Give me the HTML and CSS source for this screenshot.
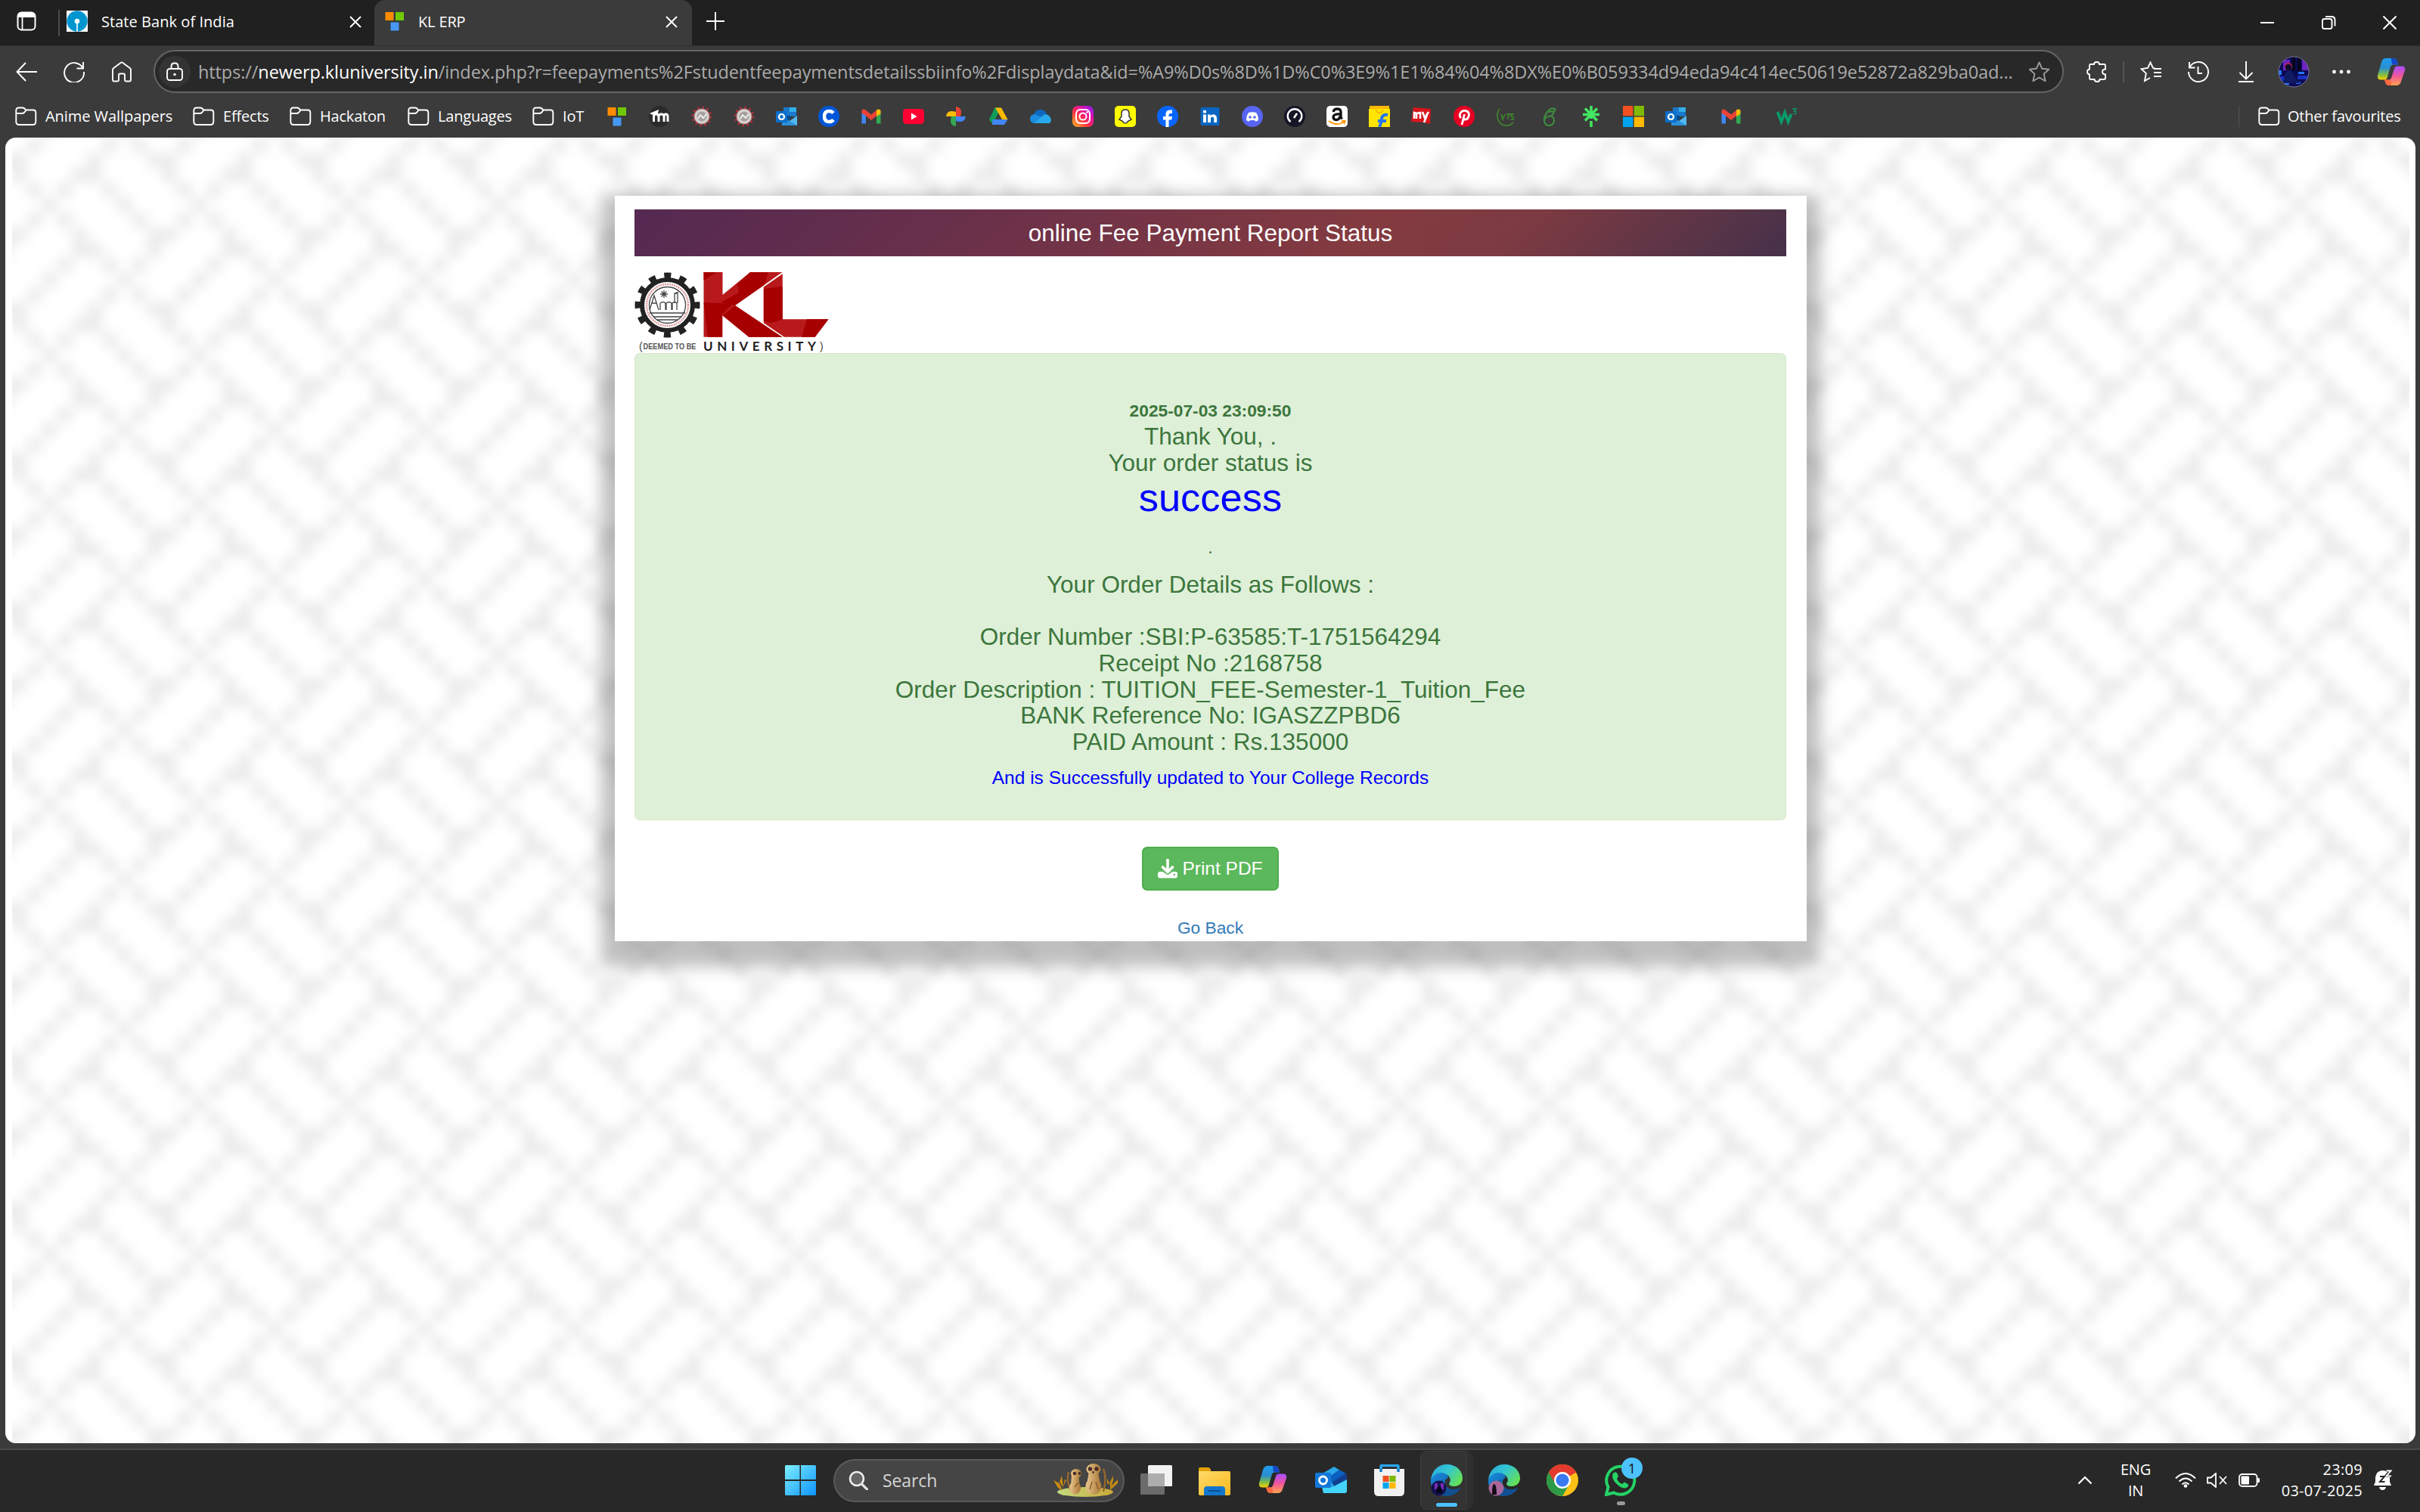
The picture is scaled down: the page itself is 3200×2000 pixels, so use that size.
FILE: index.html
```html
<!DOCTYPE html>
<html lang="en">
<head>
<meta charset="utf-8">
<title>KL ERP</title>
<link rel="stylesheet" href="styles.css">
</head>
<body>
<svg class="defs" width="0" height="0">
  <defs>
    <linearGradient id="cpA" x1="0" y1="0" x2="0" y2="1"><stop offset="0" stop-color="#1f9df0"/><stop offset=".45" stop-color="#2a8fd0"/><stop offset=".75" stop-color="#7cbb4a"/><stop offset="1" stop-color="#f5d000"/></linearGradient>
    <linearGradient id="cpB" x1="0" y1="0" x2="0" y2="1"><stop offset="0" stop-color="#a64dff"/><stop offset=".5" stop-color="#f0569a"/><stop offset="1" stop-color="#ffa34d"/></linearGradient>
    <linearGradient id="insta" x1="0" y1="1" x2="1" y2="0"><stop offset="0" stop-color="#ffc020"/><stop offset=".4" stop-color="#ff3040"/><stop offset=".7" stop-color="#e010b0"/><stop offset="1" stop-color="#7a20ff"/></linearGradient>
    <linearGradient id="edgeA" x1="0" y1="0" x2="1" y2=".6"><stop offset="0" stop-color="#2aa5d8"/><stop offset=".5" stop-color="#33c5d5"/><stop offset="1" stop-color="#62e05a"/></linearGradient>
    <linearGradient id="edgeB" x1="0" y1="0" x2="1" y2="1"><stop offset="0" stop-color="#1a8fe0"/><stop offset="1" stop-color="#0c4a90"/></linearGradient>
    <linearGradient id="win" x1="0" y1="0" x2="1" y2="1"><stop offset="0" stop-color="#7df0ff"/><stop offset="1" stop-color="#0d93ff"/></linearGradient>
    <linearGradient id="fold" x1="0" y1="0" x2="1" y2="1"><stop offset="0" stop-color="#ffda6a"/><stop offset="1" stop-color="#f9b81c"/></linearGradient>
    <linearGradient id="grass" x1="0" y1="0" x2="1" y2="0"><stop offset="0" stop-color="#c5dc80"/><stop offset="1" stop-color="#c8a838"/></linearGradient>
    <linearGradient id="fur" x1="0" y1="0" x2="1" y2="0"><stop offset="0" stop-color="#e8c48a"/><stop offset="1" stop-color="#a87838"/></linearGradient>
    <symbol id="folder" viewBox="0 0 29 26"><path d="M1.300 20V5q0-3.500 3.500-3.500h5q1.500 0 2.500 1l2 2h9.500q3.500 0 3.500 3.500v12q0 4-4 4H5.300q-4 0-4-4zM1.300 9h8q1.500 0 2.500-1l3-3.500" fill="none" stroke="#fff" stroke-width="1.900"/></symbol>
    <symbol id="klerp" viewBox="0 0 28 28"><path fill="#ff8c00" d="M1.500 2h11v11h-11z"/><path fill="#70c800" d="M15 2h11v11H15z"/><path fill="#4698f4" d="M8.500 15.500h11v11h-11z"/></symbol>
    <symbol id="seal" viewBox="0 0 28 28"><circle cx="14" cy="14" r="12" fill="none" stroke="#b02c34" stroke-width="3" stroke-dasharray="2.500 3.780"/><circle cx="14" cy="14" r="10" fill="#d8d3d1" stroke="#b98285" stroke-width="1.200"/><circle cx="14" cy="14" r="6.500" fill="#a5a09e"/><path d="M9 17l3-5 4 4 4-5" stroke="#eee" stroke-width="2" fill="none"/></symbol>
    <symbol id="outlook" viewBox="0 0 28 28"><path fill="#1a78cc" d="M10 2h17v12H10z"/><path fill="#33b0ea" d="M18 2h9v6h-9z"/><path fill="#0a4a8c" d="M10 13h9v6h-9z"/><path fill="#50b8ee" d="M28 13v13H8l10-6z"/><path fill="#2b8fd9" d="M8 14l20 12H8z"/><rect y="7" width="15" height="15" rx="1.500" fill="#0b6fca"/><circle cx="7.500" cy="14.500" r="3.500" fill="none" stroke="#fff" stroke-width="2.200"/></symbol>
    <symbol id="gmail" viewBox="0 0 28 28"><path fill="#4285f4" d="M1.500 9v14.500H7V12z"/><path fill="#34a853" d="M26.500 9v14.500H21V12z"/><path fill="#ea4335" d="M1.500 6.500q1-3 4.500-1.500l8 6.500L22 5v7.500l-8 6.500-8-6.500-4.500-3z"/><path fill="#fbbc04" d="M21 5.500q4.500-2.500 5.500 1v4L21 14z"/></symbol>
    <symbol id="ms" viewBox="0 0 28 28"><path fill="#f25022" d="M0 0h13.300v13.300H0z"/><path fill="#7fba00" d="M14.700 0H28v13.300H14.700z"/><path fill="#00a4ef" d="M0 14.700h13.300V28H0z"/><path fill="#ffb900" d="M14.700 14.700H28V28H14.700z"/></symbol>
    <symbol id="copilot" viewBox="0 0 40 40"><path fill="url(#cpA)" d="M13 1h10q4 0 5 4l1.500 5h-7q-3 0-4 4l-4 14q-1 3-4 3H5q-5 0-4-6L6.500 6q1.500-5 6.500-5z"/><path fill="#1747c8" d="M20 1h3q4 0 5 4l1.500 5h-6q-3 0-3-4z"/><path fill="url(#cpB)" d="M27 39H17q-4 0-5-4l-1.500-4h6q3 0 4-4l4-12q1-3 4-3H35q5 0 4 6l-5.500 16Q32 39 27 39z"/><path fill="#ff6a3c" d="M20 39h-3q-4 0-5-4l-1.500-4h5q4 0 4.500 4z"/></symbol>
    <symbol id="edge" viewBox="0 0 42 42"><path fill="url(#edgeB)" d="M0 21C1 12 9 9 15 10q7 1 8 7l-4 4c-2 9 6 16 20 10q-6 11-19 11C8 42-1 32 0 21z"/><path fill="#104f90" d="M16 20c-2 10 8 18 23 11q-6 11-19 11C8 40 8 24 16 20z"/><path fill="url(#edgeA)" d="M0 20C2 7 10 0 21 0c12 0 21 8 21 18 0 7-5 11-11 11-5 0-8-2-6.500-4.500C27 22 26 17 22 14 15 8 4 11 0 20z"/></symbol>
    <symbol id="close" viewBox="0 0 16 16"><path d="M1 1l14 14M15 1L1 15" fill="none" stroke="#fff" stroke-width="1.900"/></symbol>
  </defs>
</svg>

<header class="browser">
  <div class="tabs">
    <svg class="tab-actions" viewBox="0 0 26 26"><rect x="1.500" y="1.500" width="23" height="23" rx="5" fill="none" stroke="#fff" stroke-width="2"/><path d="M2 8V5q0-3 3-3h16q3 0 3 3v3z" fill="#fff"/><path d="M7.500 8v16" stroke="#fff" stroke-width="1.800"/></svg>
    <span class="tab-sep"></span>
    <div class="tab tab-first">
      <svg class="fav" viewBox="0 0 28 28"><path fill="#fff" d="M0 0h28v28H0z"/><circle cx="14" cy="14" r="13.700" fill="#0095cf"/><circle cx="14" cy="14" r="3.300" fill="#fff"/><path d="M14 15v13" stroke="#fff" stroke-width="1.600"/></svg>
      <span class="tab-title title-sbi">State Bank of India</span>
      <svg class="tab-close"><use href="#close"/></svg>
    </div>
    <div class="tab tab-active">
      <svg class="fav"><use href="#klerp"/></svg>
      <span class="tab-title">KL ERP</span>
      <svg class="tab-close"><use href="#close"/></svg>
    </div>
    <svg class="new-tab" viewBox="0 0 24 24"><path d="M12 0v24M0 12h24" stroke="#fff" stroke-width="1.900"/></svg>
    <div class="window-controls">
      <svg viewBox="0 0 20 20"><path d="M1 10h18" stroke="#fff" stroke-width="2"/></svg>
      <svg viewBox="0 0 20 20"><rect x="2" y="5" width="12.500" height="13" rx="2.500" fill="none" stroke="#fff" stroke-width="1.900"/><path d="M6 2h8q4.500 0 4.500 4.500v8" fill="none" stroke="#fff" stroke-width="1.900"/></svg>
      <svg viewBox="0 0 20 20"><path d="M1.500 1.500l17 17M18.500 1.500l-17 17" stroke="#fff" stroke-width="2"/></svg>
    </div>
  </div>

  <div class="toolbar">
    <div class="tool"><svg viewBox="0 0 28 28"><path d="M28 14H1.500M13 2L1.500 14 13 26" fill="none" stroke="#fff" stroke-width="1.900"/></svg></div>
    <div class="tool"><svg viewBox="0 0 28 28"><path d="M25.500 9A13 13 0 1 0 27 14M26 1v8.500h-8.500" fill="none" stroke="#fff" stroke-width="1.900"/></svg></div>
    <div class="tool"><svg viewBox="0 0 28 28"><path d="M2 11.500q0-1.500 1-2.300L13 1.700q1-.7 2 0l10 7.500q1 .8 1 2.300V25q0 1.500-1.500 1.500h-5Q18 26.500 18 25v-7q0-1.500-1.500-1.500h-5Q10 16.500 10 18v7q0 1.500-1.500 1.500h-5Q2 26.500 2 25z" fill="none" stroke="#fff" stroke-width="1.900"/></svg></div>
    <div class="address">
      <span class="lock"><svg viewBox="0 0 24 26"><rect x="2" y="9" width="20" height="15" rx="3.500" fill="none" stroke="#fff" stroke-width="1.900"/><path d="M7.500 9V6q0-4.500 4.500-4.500T16.500 6v3" fill="none" stroke="#fff" stroke-width="1.900"/><circle cx="12" cy="16.500" r="1.800" fill="#fff"/></svg></span>
      <span class="url">https://<b>newerp.kluniversity.in</b>/index.php?r=feepayments%2Fstudentfeepaymentsdetailssbiinfo%2Fdisplaydata&amp;id=%A9%D0s%8D%1D%C0%3E9%1E1%84%04%8DX%E0%B059334d94eda94c414ec50619e52872a829ba0ad...</span>
      <svg class="star" viewBox="0 0 28 28"><path d="M14 1.500l3.800 8.300 9 1-6.700 6 2 9.400L14 21.500 5.900 26.200l2-9.400-6.700-6 9-1z" fill="none" stroke="#9b9b9b" stroke-width="1.900" stroke-linejoin="round"/></svg>
    </div>
    <div class="tool tool-ext"><svg viewBox="0 0 28 28"><path d="M4 5.500q0-1.500 1.500-1.500H10q0-3 3.500-3T17 4h6q2 0 2 2v4.500q-4 .3-4 3.500t4 3.500V22q0 2-2 2h-5.500q0 3-3.500 3t-3.500-3H6q-2 0-2-2v-4.500Q1 17 1 14t3-3.500z" fill="none" stroke="#fff" stroke-width="1.900"/></svg></div>
    <span class="tool-sep"></span>
    <div class="tool"><svg viewBox="0 0 28 28"><path d="M19.500 9.500L17 9 13.500 1.500 10 9l-8.500 1.200L7.800 16 6 26l7-4M18 10h10M18 15h10M18 20h10" fill="none" stroke="#fff" stroke-width="1.900"/></svg></div>
    <div class="tool"><svg viewBox="0 0 28 28"><path d="M2.500 8A13 13 0 1 1 1 14M2 1v7.500h7.500M13.500 7v9H19" fill="none" stroke="#fff" stroke-width="1.900"/></svg></div>
    <div class="tool"><svg viewBox="0 0 28 28"><path d="M14 0v23M5.500 15l8.500 8.500 8.500-8.500M4 27h20" fill="none" stroke="#fff" stroke-width="1.900"/></svg></div>
    <div class="tool"><svg class="avatar" viewBox="0 0 42 42"><clipPath id="avc"><circle cx="21" cy="21" r="20"/></clipPath><g clip-path="url(#avc)"><path fill="#0a0a55" d="M0 0h42v42H0z"/><path fill="#6a24c0" d="M7 5h9v14H7zM32 5h9v14h-9z"/><path fill="#2478ff" d="M0 19h5v6H0zM27 21h8v3h-8zM8 35h7v3H8zM24 34h6v3h-6z"/><path fill="#1a30c0" d="M0 27h9v6H0zM26 26h14v5H26z"/><path fill="#05051a" d="M19 0h4v20h-4zM26 0h4v20h-4z"/><circle cx="14" cy="14" r="5" fill="#b0204a"/><circle cx="14" cy="15" r="4" fill="#0a0a28"/><path fill="#101a60" d="M8 36q0-16 7-17 6 1 7 9l8 8z"/></g><circle cx="21" cy="21" r="20" fill="none" stroke="#77759a"/></svg></div>
    <div class="tool"><svg viewBox="0 0 28 28"><g fill="#fff"><circle cx="4.500" cy="14" r="2.400"/><circle cx="14" cy="14" r="2.400"/><circle cx="23.500" cy="14" r="2.400"/></g></svg></div>
    <div class="tool tool-copilot"><svg><use href="#copilot"/></svg></div>
  </div>

  <nav class="bookmarks">
    <div class="bm bm-anime"><svg><use href="#folder"/></svg><span>Anime Wallpapers</span></div>
    <div class="bm bm-effects"><svg><use href="#folder"/></svg><span>Effects</span></div>
    <div class="bm bm-hack"><svg><use href="#folder"/></svg><span>Hackaton</span></div>
    <div class="bm bm-lang"><svg><use href="#folder"/></svg><span>Languages</span></div>
    <div class="bm bm-iot"><svg><use href="#folder"/></svg><span>IoT</span></div>
    <div class="sites">
      <svg><use href="#klerp"/></svg>
      <svg viewBox="0 0 28 28"><circle cx="14" cy="14" r="14" fill="#2b2b2b"/><path d="M6.500 21v-7q0-3 3-3t3.500 3v7m0-7q0-3 3.500-3t3.500 3v7m0-7q0-3 2.500-3t2.500 3v7" fill="none" stroke="#fff" stroke-width="3"/><path d="M1 10l12-5-1 5-7 2z" fill="#fff"/></svg>
      <svg><use href="#seal"/></svg>
      <svg><use href="#seal"/></svg>
      <svg><use href="#outlook"/></svg>
      <svg viewBox="0 0 28 28"><circle cx="14" cy="14" r="14" fill="#0056d8"/><path d="M20 9.500q-2-2.500-5.500-2.500-6.500 0-6.500 7t6.500 7q3.500 0 5.500-2.500" fill="none" stroke="#fff" stroke-width="4.500"/></svg>
      <svg><use href="#gmail"/></svg>
      <svg viewBox="0 0 28 28"><rect y="4" width="28" height="20" rx="4.500" fill="#ff0033"/><path d="M11 9.500l7.500 4.500-7.500 4.500z" fill="#fff"/></svg>
      <svg viewBox="0 0 28 28"><path fill="#ea4335" d="M14 1q7 1 7 7 0 3-1 6h-6z"/><path fill="#4285f4" d="M27 14q-1 7-7 7-3 0-6-1v-6z"/><path fill="#34a853" d="M14 27q-7-1-7-7 0-3 1-6h6z"/><path fill="#fbbc04" d="M1 14q1-7 7-7 3 0 6 1v6z"/></svg>
      <svg viewBox="0 0 28 28"><path fill="#0f9d58" d="M9.500 2.500h8L7 25l-5-7z"/><path fill="#ffba00" d="M10 2.500h8l8.500 15.500H19z"/><path fill="#4285f4" d="M6.500 18h20L22 25H6z"/><path fill="#3c3c3c" d="M14 10l4 8h-8z"/></svg>
      <svg viewBox="0 0 28 28"><path fill="#0d68c0" d="M5 14q0-9 9-9 6 0 8 6l-8 6z"/><path fill="#1c8ade" d="M5 23q-5-1-5-6 0-6 7-6l10 5z"/><path fill="#28a8ea" d="M5 23l13-11q5-2 8 2 4 5 0 9z"/></svg>
      <svg viewBox="0 0 28 28"><rect width="28" height="28" rx="7" fill="url(#insta)"/><rect x="5" y="5" width="18" height="18" rx="5.500" fill="none" stroke="#fff" stroke-width="2"/><circle cx="14" cy="14" r="4.500" fill="none" stroke="#fff" stroke-width="2"/><circle cx="19.500" cy="8.500" r="1.300" fill="#fff"/></svg>
      <svg viewBox="0 0 28 28"><rect width="28" height="28" rx="5" fill="#fffc00"/><path d="M14 5q5 0 5 5v4l3 4-4 2q-2 3-4 3t-4-3l-4-2 3-4v-4q0-5 5-5z" fill="#fff" stroke="#333" stroke-width="1.500"/></svg>
      <svg viewBox="0 0 28 28"><circle cx="14" cy="14" r="14" fill="#0866ff"/><path d="M11.500 28v-9.500H8V14h3.500v-3q0-5.500 5.500-5.500h3V10h-2q-2.500 0-2.500 2v2H20l-.8 4.500H15.500V28z" fill="#fff"/></svg>
      <svg viewBox="0 0 28 28"><rect x="1.500" y="2" width="25" height="24" rx="2" fill="#0a66c2"/><path d="M5 11.500h4V22H5zM5 6h4v3.500H5zM11 11.500h3.500V13q4-3.500 7.500 0 1 1.500 1 3.500V22h-3.800v-5q0-2.500-2.100-2.500T15 17v5h-4z" fill="#fff"/></svg>
      <svg viewBox="0 0 28 28"><circle cx="14" cy="14" r="14" fill="#5865f2"/><path d="M9 9q5-1.500 10 0 3 4 3 10-2 1.500-4 1.500L17 19h-6l-1 1.500q-2 0-4-1.500 0-6 3-10z" fill="#fff"/><circle cx="11" cy="15" r="1.800" fill="#5865f2"/><circle cx="17" cy="15" r="1.800" fill="#5865f2"/></svg>
      <svg viewBox="0 0 28 28"><circle cx="14" cy="14" r="14" fill="#141526"/><path d="M8.500 21A9.300 9.300 0 1 1 19.500 21" fill="none" stroke="#fff" stroke-width="2.400"/><path d="M13 16l4-6" stroke="#fff" stroke-width="2.500"/></svg>
      <svg viewBox="0 0 28 28"><rect width="28" height="28" rx="5" fill="#fff"/><path d="M9 8q1-4 5.500-4T19 8.500V15l1.500 2.500M18 11q-8-.5-9 3.500 0 4 4 4t5-5" fill="none" stroke="#111" stroke-width="3.300"/><path d="M3 20q11 8 20 1M20 20h4.500q0 2-1.500 4" fill="none" stroke="#ff9900" stroke-width="2"/></svg>
      <svg viewBox="0 0 28 28"><path fill="#ffb900" d="M1 0h26v7H1z"/><path fill="#ffe500" d="M0 4h28v24H0z"/><path d="M9 5q5 9 10 0" fill="none" stroke="#f7a800" stroke-width="1.500"/><path d="M14 28q3-6 3-11 1-6 8-5M12 20h11" fill="none" stroke="#2874f0" stroke-width="4"/></svg>
      <svg viewBox="0 0 28 28"><path fill="#d9151c" d="M3 2l23 2-1 20-8-2-17-1z"/><path d="M4 17V9l3 1v7m0-7l5-1v8M15 8l3 8 5-8M21 12l-4 10" fill="none" stroke="#fff" stroke-width="2.600"/></svg>
      <svg viewBox="0 0 28 28"><circle cx="14" cy="14" r="14" fill="#e60023"/><path d="M10 16q-2.500-2-1.500-5 2-5 7-4.500t5 5.500q-1 6-5 6-2.500 0-2.500-2M14.500 11l-3.500 14" fill="none" stroke="#fff" stroke-width="2.800"/></svg>
      <svg viewBox="0 0 28 28"><path d="M5 4q-4 5-3 11 2 10 10 11 6 1 11-4M7 11l2 7 3-7M14 11h4l-2 3v4M24 11h-4v3q4 0 3 4h-3" fill="none" stroke="#3f7f2c" stroke-width="1.800"/></svg>
      <svg viewBox="0 0 28 28"><path d="M23 4q-6-2-10 3-6 7-5 13 1 6 6 6 6 0 7-6 0-6-5-6.500-5 0-8 5M13 8l8-1M23 4l-5 9" fill="none" stroke="#3f8a3e" stroke-width="2.200"/></svg>
      <svg viewBox="0 0 28 28"><path d="M14 0v17M3 11.500h22M6 3.500l16 16M22 3.500l-16 16M14 20v8" fill="none" stroke="#43e660" stroke-width="3.600"/></svg>
      <svg><use href="#ms"/></svg>
      <svg><use href="#outlook"/></svg>
      <svg class="gmail-two"><use href="#gmail"/></svg>
      <svg class="w-three" viewBox="0 0 28 28"><path d="M1.500 8l5 13 4.500-12 4.500 12 4-10" fill="none" stroke="#0a9b6c" stroke-width="3.800"/><path d="M21 4h5l-2.500 3q3 .3 2.500 3-1 1.500-4.500.5" fill="none" stroke="#0a9b6c" stroke-width="1.300"/></svg>
    </div>
    <div class="bm other"><svg><use href="#folder"/></svg><span>Other favourites</span></div>
  </nav>
</header>

<main class="viewport">
  <svg class="weave">
    <defs>
      <filter id="soft" x="-20%" y="-20%" width="140%" height="140%" color-interpolation-filters="sRGB"><feGaussianBlur stdDeviation=".37"/></filter>
      <pattern id="cells" width="10" height="10" patternUnits="userSpaceOnUse" patternTransform="translate(9 0) scale(19.83)">
        <g filter="url(#soft)" fill="#ececec">
          <path id="tile" d="M1 0h1v1h-1zM6 0h1v1h-1zM8 0h1v1h-1zM0 1h1v2h-1zM5 1h1v1h-1zM9 1h1v1h-1zM4 2h2v1h-2zM1 3h1v1h-1zM3 3h1v1h-1zM6 3h1v1h-1zM2 4h1v1h-1zM7 4h1v1h-1zM1 5h1v1h-1zM3 5h1v1h-1zM8 5h1v1h-1zM0 6h1v1h-1zM4 6h1v1h-1zM9 6h1v2h-1zM4 7h2v1h-2zM3 8h1v1h-1zM6 8h1v1h-1zM8 8h1v1h-1zM2 9h1v1h-1zM7 9h1v1h-1z"/>
          <use href="#tile" x="10"/><use href="#tile" x="-10"/><use href="#tile" y="10"/><use href="#tile" y="-10"/>
        </g>
      </pattern>
    </defs>
    <rect x="9" width="3170" height="1727" fill="url(#cells)"/>
  </svg>
  <section class="card">
    <h1 class="card-title">online Fee Payment Report Status</h1>
    <svg class="logo" viewBox="0 0 258 107">
      <g fill="none"><circle cx="43.500" cy="43.500" r="39" stroke="#222" stroke-width="8" stroke-dasharray="9 11.420" stroke-dashoffset="4.500"/><circle cx="43.500" cy="43.500" r="33.500" stroke="#222" stroke-width="6"/><circle cx="43.500" cy="43.500" r="27.500" stroke="#d99" stroke-width="2.500" stroke-dasharray="2 1"/><circle cx="43.500" cy="43.500" r="24" stroke="#444" stroke-width="1.300"/>
      <path d="M20 54h47M20 50l6-19 6 19M23 41h6M34 50V41q4-3 7 0v9M42 50v-9q4-3 7 0v9M50 50v-9q3-3 6 0v9M53 41V28h4v13M53 28l5-2M25 59h37M30 63h27M39 24v10M34 29h10M35.500 25.500l7 7M42.500 25.500l-7 7" stroke="#444" stroke-width="1.300"/></g>
      <path fill="#b81a1c" d="M91.500 0h25v30L153 0h42.400L134.200 44l62.500 41.700h-45.500L116.400 57.300v28.400h-24.900z"/>
      <path fill="#a60000" d="M91.500 11L109 0H91.500zM136 16L153 0h24l-5 17-37 26 2 2-23-5 24-13zM91.500 40l38 2-14 14v29.700H97z"/><path fill="#a60000" d="M134 44l62.700 41.700h-45.500L116.400 57.300z"/>
      <path fill="#b81a1c" d="M170.800 19.300l25-17.300v60.300h60.700l-17.800 23.400h-41l-26.900-18.400z"/>
      <path fill="#a60000" d="M170.800 22l25-3v43.300l-15 5-10-3zM228 62.300h28.500l-17.800 23.400H221z"/>
      <path d="M196 1L134.500 44 197 86" fill="none" stroke="#fff" stroke-width="1.500"/>
      <text x="6" y="102.500" font-size="14" fill="#444" font-family="Liberation Sans">(</text>
      <text x="11.500" y="102" font-size="10.500" font-weight="bold" fill="#555" font-family="Liberation Sans" textLength="70" lengthAdjust="spacingAndGlyphs">DEEMED TO BE</text>
      <text x="91" y="103.500" font-size="17" font-weight="bold" fill="#222" font-family="Lato" textLength="149">UNIVERSITY</text>
      <text x="245" y="102.500" font-size="14" fill="#444" font-family="Liberation Sans">)</text>
    </svg>
    <div class="notice">
      <p class="stamp">2025-07-03 23:09:50</p>
      <p>Thank You, .</p>
      <p>Your order status is</p>
      <p class="success">success</p>
      <p class="dot">.</p>
      <p class="details">Your Order Details as Follows :</p>
      <p>Order Number :SBI:P-63585:T-1751564294</p>
      <p>Receipt No :2168758</p>
      <p>Order Description : TUITION_FEE-Semester-1_Tuition_Fee</p>
      <p>BANK Reference No: IGASZZPBD6</p>
      <p>PAID Amount : Rs.135000</p>
      <p class="updated">And is Successfully updated to Your College Records</p>
    </div>
    <a class="print"><svg viewBox="0 0 26 26"><path d="M13 1.500v14M6.500 11l6.500 6.500 6.500-6.500" fill="none" stroke="#fff" stroke-width="3.600" stroke-linecap="round"/><path fill="#fff" d="M3 17h3.500l6.500 4.500 6.500-4.500H23q3 0 3 3v2.500q0 3-3 3H3q-3 0-3-3V20q0-3 3-3z"/><circle cx="21.800" cy="21" r="1.200" fill="#5cb85c"/></svg>Print PDF</a>
    <a class="back">Go Back</a>
  </section>
</main>

<footer class="taskbar">
  <div class="dock">
    <svg class="start" viewBox="0 0 41 40"><path fill="url(#win)" d="M1.500 0H19.500v19H0V1.500Q0 0 1.500 0zM21 0h18.500Q41 0 41 1.500V19H21zM0 21h19.500v19h-18Q0 40 0 38.500zM21 21h20v17.500q0 1.500-1.500 1.500H21z"/></svg>
    <div class="search">
      <svg class="lens" viewBox="0 0 26 26"><circle cx="11" cy="11" r="9" fill="#666" stroke="#f0f0f0" stroke-width="2.600"/><path d="M17.500 18l7 7" stroke="#dfe4e8" stroke-width="3.200" stroke-linecap="round"/></svg>
      <span>Search</span>
      <svg class="meerkats" viewBox="0 0 86 44"><ellipse cx="42" cy="37.500" rx="37" ry="6.500" fill="url(#grass)"/><path d="M22 34q-5-12-2-23M66 37q5-18 0-30" fill="none" stroke="#94682c" stroke-width="2.500"/><g fill="#c78a12"><path d="M12 36L8 26 0 22l6 10zM13 32l-1-9-1-7-3 8zM13 30l4-8-2-1zM75 35l4-13 0-6-4 8zM75 35l10-9 0-5-8 8zM75 28l-4-8 0 6z"/></g><g fill="url(#fur)"><ellipse cx="28.500" cy="32" rx="7.500" ry="9"/><path d="M24 14h9l2 16H23z"/><ellipse cx="30" cy="13" rx="7" ry="6"/><ellipse cx="53" cy="30" rx="10.500" ry="11"/><path d="M47 10h12l3 18H44z"/><ellipse cx="53" cy="7.500" rx="9.500" ry="7.500"/></g><g fill="#4a2b28"><circle cx="28" cy="13" r="2.300"/><circle cx="34.500" cy="13" r="2"/><circle cx="48.500" cy="7" r="2.700"/><circle cx="57" cy="7" r="2.700"/><circle cx="52.500" cy="11.500" r="1.400"/></g><path d="M33 25l-5 6M51 24l-3 10M56 24l3 10" stroke="#8a602c" stroke-width="1.500"/></svg>
    </div>
    <svg class="app app-task" viewBox="0 0 42 42"><rect x="0" y="12" width="32" height="28" rx="1.500" fill="#6b6b6b"/><rect x="10" y="1" width="32" height="28" rx="1.500" fill="#f2f2f2"/><path fill="#adadad" d="M10 12h22v17H10z"/></svg>
    <svg class="app" viewBox="0 0 42 42"><path fill="#e3a008" d="M0 6q0-2 2-2h10q3 0 4 3v6H0z"/><path fill="url(#fold)" d="M0 9h40q2 0 2 2v28q0 2-2 2H2q-2 0-2-2z"/><path fill="#1277cc" d="M7 41V33q0-4 4-4h20q4 0 4 4v8z"/><path d="M13 35h16" stroke="#0a4f94" stroke-width="2"/></svg>
    <svg class="app" viewBox="-1 -1 42 42"><use href="#copilot" width="40" height="38"/></svg>
    <svg class="app" viewBox="0 0 42 42"><path fill="#2aa7e8" d="M10 12L25 3l16 10v20H10z"/><path fill="#0b5fc0" d="M18 17l14-10 10 6-18 14z"/><path fill="#123f90" d="M22 24l18-12 2 4v6L26 30z"/><path fill="#44d4fa" d="M42 20v15q0 3-3 3H11l-2-8h14z"/><rect y="11" width="21" height="20" rx="2" fill="#1277d8"/><circle cx="10.500" cy="21" r="5" fill="none" stroke="#fff" stroke-width="2.800"/></svg>
    <svg class="app" viewBox="0 0 42 42"><path d="M10 10V3q0-1.500 1.500-1.500h20Q33 1.500 33 3v6" fill="none" stroke="#28a8ee" stroke-width="3.500"/><path fill="#f1f1f1" d="M1 6h40v30q0 6-6 6H7q-6 0-6-6z"/><path d="M10 6v4M33 6v4" stroke="#1478c0" stroke-width="3.500"/><svg x="12" y="15" width="18" height="17"><use href="#ms"/></svg></svg>
    <div class="app running"><svg viewBox="0 0 42 42"><use href="#edge"/><circle cx="10.500" cy="31.500" r="10" fill="#151250"/><path fill="#7a2cb8" d="M5 25h4v8H5zM13 25h4v8h-4z"/><path fill="#05051a" d="M7 38q0-9 4-9t4 9z"/></svg></div>
    <svg class="app" viewBox="0 0 42 42"><use href="#edge"/><circle cx="10.500" cy="31.500" r="10" fill="#a8689c"/><path fill="#120c18" d="M5 40q0-15 3-14t3 14z"/></svg>
    <svg class="app" viewBox="0 0 42 42"><circle cx="21" cy="21" r="21" fill="#fbc116"/><path fill="#e33b2e" d="M21 21L2.800 10.500A21 21 0 0 1 39.200 10.500z"/><path fill="#2d9a48" d="M2.800 10.500A21 21 0 0 0 21 42l9.500-16.500-9.500-4.500z"/><path fill="#e33b2e" d="M2.800 10.500L12 26l9-15z"/><circle cx="21" cy="21" r="11" fill="#fff"/><circle cx="21" cy="21" r="8.600" fill="#3a7af0"/></svg>
    <div class="app whatsapp"><svg viewBox="0 0 42 42"><path d="M2 40l2.500-10A18.500 18.500 0 1 1 12 37.500z" fill="none" stroke="#25d366" stroke-width="4"/><path d="M12 11q3-2 4.500 1l1.500 4-2 3q2 5 7 7l3-2.500 4.500 2.500q2 2-1 4.500-5 3-12-3T10 16q0-4 2-5z" fill="#25d366"/></svg><span class="badge">1</span></div>
  </div>
  <div class="tray">
    <svg class="chev" viewBox="0 0 20 12"><path d="M1.500 10.500L10 2l8.500 8.500" fill="none" stroke="#fff" stroke-width="2.200"/></svg>
    <div class="lang"><span>ENG</span><span>IN</span></div>
    <svg class="wifi" viewBox="0 0 28 22"><path d="M1 8.500Q14-4.500 27 8.500M5.500 12.500q8.500-8 17 0M9.500 16.500q4.500-4.500 9 0" fill="none" stroke="#fff" stroke-width="2"/><circle cx="14" cy="18.500" r="2.300" fill="#fff"/></svg>
    <svg class="vol" viewBox="0 0 28 20"><path d="M1 6.500v7h4.500l6.500 5.500V1L5.500 6.500zM17 5l9 10M26 5l-9 10" fill="none" stroke="#fff" stroke-width="1.800"/></svg>
    <svg class="batt" viewBox="0 0 28 18"><rect x="1" y="1" width="23.500" height="16" rx="4" fill="none" stroke="#fff" stroke-width="1.800"/><rect x="3.500" y="3.500" width="10.500" height="11" rx="1" fill="#fff"/><path d="M25 6h1.500q1.500 0 1.500 1.500v3q0 1.500-1.500 1.500H25z" fill="#fff"/></svg>
    <div class="clock"><span>23:09</span><span>03-07-2025</span></div>
    <svg class="bell" viewBox="0 0 25 28"><path fill="#fff" d="M0 21l2-5V10q1-8 9-9 9 0 10 9v6l2 5zM7 23h9q-1 4-4.500 4T7 23z"/><path d="M8 9h6l-6 7h6.500" fill="none" stroke="#282828" stroke-width="2"/><path d="M16.500 1h6l-6 7H23" fill="none" stroke="#282828" stroke-width="4"/><path d="M16.500 1.500h6l-6 7H23" fill="none" stroke="#fff" stroke-width="1.900"/></svg>
  </div>
</footer>
</body>
</html>
```
FILE: styles.css
```css
* { box-sizing: border-box; }
body { margin: 0; width: 3200px; height: 2000px; overflow: hidden; background: #3b3b3b; color: #fff; font-family: "Open Sans", sans-serif; font-size: 20px; display: flex; flex-direction: column; }
svg { display: block; flex: none; }
.defs { position: absolute; }
span { white-space: nowrap; }

.browser { height: 182px; flex: none; display: flex; flex-direction: column; }
.tabs { height: 60px; background: #202020; display: flex; align-items: center; padding-left: 22px; }
.tab-actions { width: 26px; height: 26px; margin-bottom: 4px; }
.tab-sep { width: 2px; height: 35px; background: #4b4b4b; margin-left: 29px; }
.tab { height: 60px; display: flex; align-items: center; padding-bottom: 4px; }
.tab-first { width: 416px; padding-left: 9px; }
.tab-active { width: 420px; padding-left: 13px; background: #3b3b3b; border-radius: 14px 14px 0 0; }
.fav { width: 28px; height: 28px; }
.tab-title { flex: 1; margin-left: 17px; letter-spacing: -.15px; }
.title-sbi { margin-left: 18px; letter-spacing: .05px; }
.tab-close { width: 16px; height: 16px; margin: 2px 17px 0 0; }
.tab-active .tab-close { margin-right: 19px; }
.new-tab { width: 24px; height: 24px; margin: 0 0 5px 19px; }
.window-controls { margin-left: auto; display: flex; gap: 61px; padding-right: 30px; }
.window-controls svg { width: 20px; height: 20px; }

.toolbar { height: 70px; display: flex; align-items: center; padding: 0 3px 2px 3px; border-top: 1px solid #303030; }
.tool { width: 63px; display: flex; justify-content: center; flex: none; }
.tool svg { width: 28px; height: 28px; }
.tool .avatar { width: 42px; height: 42px; }
.tool-ext { margin-left: 12px; }
.tool-sep { width: 2px; height: 28px; background: #555; margin: 0 3px; flex: none; }
.tool-copilot { width: 69px; }
.tool-copilot svg { width: 40px; height: 38px; }
.address { width: 2526px; height: 57px; margin-left: 11px; flex: none; border: 2px solid #646464; border-radius: 29px; background: #282828; display: flex; align-items: center; padding: 0 16px 0 5px; }
.lock { width: 42px; height: 42px; border-radius: 50%; background: #343434; display: flex; align-items: center; justify-content: center; }
.lock svg { width: 24px; height: 26px; }
.url { width: 2400px; margin-left: 10px; font-size: 23.5px; color: #ababab; letter-spacing: -.1px; }
.url b { color: #fff; font-weight: 400; }
.star { width: 29px; height: 28px; margin-left: auto; }

.bookmarks { height: 52px; display: flex; align-items: center; padding-left: 20px; padding-bottom: 5px; }
.bm { display: flex; align-items: center; gap: 11px; height: 28px; letter-spacing: -.2px; }
.bm svg { width: 29px; height: 26px; }
.bm-anime { width: 235px; letter-spacing: -.05px; }
.bm-effects { width: 128px; }
.bm-hack { width: 156px; }
.bm-lang { width: 165px; }
.bm-iot { width: 98px; }
.sites { display: flex; gap: 28px; }
.sites svg { width: 28px; height: 28px; }
.sites .gmail-two { margin-left: 17px; }
.sites .w-three { margin-left: 18px; }
.other { margin-left: auto; border-left: 1px solid #555; padding-left: 25px; width: 240px; gap: 10px; }

.viewport { position: relative; width: 3187px; height: 1727px; flex: none; margin-left: 7px; border-radius: 14px; overflow: hidden; background: #fff; padding: 77px 0 0 806px; }
.weave { position: absolute; inset: 0; width: 3187px; height: 1727px; }
.card { position: relative; width: 1576px; height: 986px; background: #fff; padding: 18px 27px 0 26px; box-shadow: 0 16px 20px 18px rgba(0, 0, 0, .25); font-family: "Liberation Sans", Arial, sans-serif; display: flex; flex-direction: column; align-items: center; }
.card-title { margin: 0; width: 100%; height: 62px; line-height: 62px; text-align: center; font-size: 31.5px; font-weight: 400; background: linear-gradient(135deg, #542952 0%, #69304a 28%, #843b40 63%, #7c3a42 76%, #453149 100%); }
.logo { width: 258px; height: 107px; margin-top: 21px; align-self: flex-start; }
.notice { width: 100%; height: 620px; background: #dff0d8; border: 1px solid #d6e9c6; border-radius: 7px; padding-top: 58px; color: #3c763d; text-align: center; font-size: 31.5px; line-height: 34.65px; }
.notice p { margin: 0; }
.notice .stamp { font-size: 22.75px; font-weight: 700; line-height: 34px; }
.notice .success { font-size: 52.5px; line-height: 57.75px; color: #00f; }
.notice .dot { font-size: 24.5px; line-height: 35px; margin: 19px 0 15px; }
.notice .details { margin-bottom: 34.65px; }
.notice .updated { font-size: 24.5px; line-height: 35px; margin-top: 12px; color: #00f; }
.print { width: 181px; height: 58px; margin-top: 35px; background: #5cb85c; border: 2px solid #4cae4c; border-radius: 7px; display: flex; align-items: center; justify-content: center; gap: 6px; font-size: 24.5px; }
.print svg { width: 26px; height: 26px; }
.back { margin-top: 31px; font-size: 22.75px; line-height: 36px; color: #337ab7; }

.taskbar { flex: none; height: 84px; margin-top: 7px; border-top: 2px solid #4a4a4a; background: #282828; display: flex; justify-content: space-between; }
.dock { display: flex; align-items: center; padding: 0 0 2px 1038px; height: 82px; }
.start { width: 41px; height: 40px; }
.search { width: 385px; height: 57px; margin-left: 23px; border: 2px solid #5a5a5a; border-radius: 29px; background: #454545; display: flex; align-items: center; padding: 0 6px 0 18px; font-size: 23px; color: #d5d5d5; }
.lens { width: 26px; height: 26px; }
.search span { margin-left: 19px; letter-spacing: -.1px; }
.meerkats { width: 86px; height: 44px; margin-left: auto; }
.app { width: 42px; height: 42px; margin-left: 35px; flex: none; }
.app-task { margin-left: 21px; }
.running { width: 70px; height: 78px; margin: 0 -15px 0 20px; padding: 18px 14px; position: relative; background: #333; border-radius: 9px; border-right: 8px solid #2f2f2f; box-shadow: inset 0 0 0 1px #3e3e3e; }
.running svg { width: 42px; height: 42px; }
.running::after { content: ""; position: absolute; left: 21px; bottom: 4px; width: 28px; height: 5px; border-radius: 3px; background: #4cc2ff; }
.whatsapp { position: relative; }
.whatsapp::after { content: ""; position: absolute; left: 16px; bottom: -12px; width: 11px; height: 5px; border-radius: 3px; background: #9a9a9a; }
.badge { position: absolute; left: 22px; top: -9px; width: 28px; height: 28px; border-radius: 50%; background: #4cc2ff; color: #111; font-size: 18px; line-height: 28px; text-align: center; }
.tray { display: flex; align-items: center; height: 82px; padding: 0 36px 2px 0; font-size: 20px; line-height: 28px; letter-spacing: -.2px; }
.chev { width: 20px; height: 12px; }
.lang { width: 60px; margin-left: 27px; display: flex; flex-direction: column; align-items: center; }
.wifi { width: 28px; height: 22px; margin-left: 22px; }
.vol { width: 28px; height: 20px; margin-left: 14px; }
.batt { width: 28px; height: 18px; margin-left: 14px; }
.clock { width: 120px; margin-left: 16px; display: flex; flex-direction: column; align-items: flex-end; letter-spacing: .3px; }
.bell { width: 25px; height: 28px; margin-left: 15px; }
```
